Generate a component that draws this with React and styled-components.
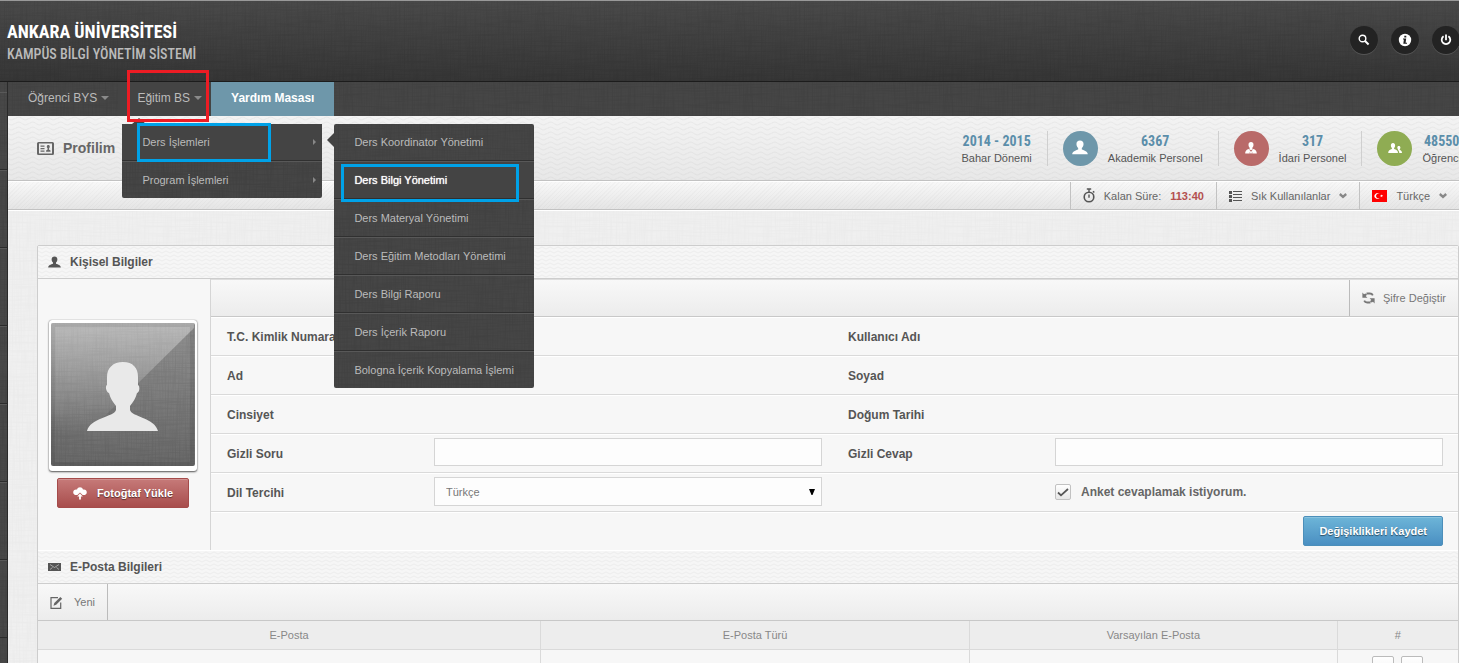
import React from 'react';
import styled, { createGlobalStyle, css } from 'styled-components';

const svgUrl = (svg) => `url("data:image/svg+xml,${encodeURIComponent(svg)}")`;

const linen = (alpha) =>
  svgUrl(
    `<svg xmlns="http://www.w3.org/2000/svg" width="200" height="200"><filter id="h" x="0" y="0" width="100%" height="100%"><feTurbulence type="fractalNoise" baseFrequency="0.03 0.7" numOctaves="2" stitchTiles="stitch"/><feColorMatrix values="0 0 0 0 0  0 0 0 0 0  0 0 0 0 0  2 0 0 0 -0.8"/></filter><filter id="v" x="0" y="0" width="100%" height="100%"><feTurbulence type="fractalNoise" baseFrequency="0.7 0.03" numOctaves="2" seed="4" stitchTiles="stitch"/><feColorMatrix values="0 0 0 0 0  0 0 0 0 0  0 0 0 0 0  2 0 0 0 -0.8"/></filter><g opacity="${alpha}"><rect width="200" height="200" filter="url(#h)"/><rect width="200" height="200" filter="url(#v)"/></g></svg>`
  );

const darkLinen = linen(0.08);
const lightLinen = linen(0.02);

const waves = svgUrl(
  '<svg xmlns="http://www.w3.org/2000/svg" width="14" height="5"><path d="M0 2.500C3 4.500 4 4 7 2.500S11 .5 14 2.500" fill="none" stroke="#000" stroke-opacity=".03"/></svg>'
);

const smallWaves = svgUrl(
  '<svg xmlns="http://www.w3.org/2000/svg" width="8" height="4"><path d="M0 1l4 2 4-2" fill="none" stroke="#000" stroke-opacity=".035"/></svg>'
);

const GlobalStyle = createGlobalStyle`
  * {
    box-sizing: border-box;
  }
  body {
    margin: 0;
    background: #efefef;
    color: #555;
    font-family: 'Liberation Sans', Arial, sans-serif;
    font-size: 11px;
    line-height: 14px;
  }
  ul {
    margin: 0;
    padding: 0;
    list-style: none;
  }
  a {
    color: inherit;
    text-decoration: none;
  }
  button, input, select {
    font: inherit;
    color: inherit;
  }
  svg {
    display: block;
    flex: none;
  }
`;

const PersonIcon = ({ size = 13 }) => (
  <svg width={size} height={size} viewBox="0 0 14 14" fill="currentColor">
    <path d="M7 .5C5 .5 3.900 1.700 3.900 3.500c0 1.600.6 2.700 1.500 3.600v1.200C3.200 9.200.2 9.800.2 12.500h13.600c0-2.700-3-3.300-5.200-4.200V7.100c.9-.9 1.500-2 1.500-3.600C10.100 1.700 9 .5 7 .5z" />
  </svg>
);

const TiePersonIcon = () => (
  <svg width="14" height="14" viewBox="0 0 14 14">
    <path
      fill="#fff"
      d="M7 1C5.400 1 4.500 2.100 4.500 3.700c0 1.400.5 2.400 1.200 3.100v.9C3.500 8.300 1.200 9 1.200 12.500h11.600c0-3.500-2.300-4.200-4.500-4.800v-.9c.7-.7 1.200-1.700 1.200-3.100C9.500 2.100 8.600 1 7 1z"
    />
    <path fill="#b96a69" d="M5 8l2 1.200L9 8l-1.200 2 .8 2.500H5.400L6.200 10z" />
    <path fill="#fff" d="M6.500 10h1l.6 1.500L7 12.500l-1.100-1z" />
  </svg>
);

const PeopleIcon = () => (
  <svg width="16" height="14" viewBox="0 0 16 14" fill="#fff">
    <path d="M6 2C4.600 2 3.900 3 3.900 4.300c0 1.300.4 2.200 1 2.800v1C3 8.700 1.200 9.300 1.200 12H11c0-2.700-2-3.300-3.900-3.900v-1c.6-.6 1-1.500 1-2.800C8.100 3 7.400 2 6 2z" />
    <path d="M11.800 5c-1 0-1.500.7-1.500 1.600 0 .8.3 1.400.7 1.800v.7c.7.5 1.200 1.500 1.300 2.900H15c0-1.900-1-2.500-2.300-2.900v-.7c.4-.4.7-1 .7-1.800 0-.9-.6-1.600-1.600-1.600z" />
  </svg>
);

const SearchIcon = () => (
  <svg width="12" height="12" viewBox="0 0 12 12" fill="none" stroke="#fff">
    <circle cx="4.500" cy="4.500" r="3.300" strokeWidth="1.400" />
    <path d="M6.800 6.800l3.800 3.600" strokeWidth="2" />
  </svg>
);

const InfoIcon = () => (
  <svg width="14" height="14" viewBox="0 0 14 14">
    <circle cx="7" cy="7" r="6.200" fill="#fff" />
    <path fill="#222" d="M6.300 2.800h2v1.700h-2zM5 5.500h3.200l-.6 4.200H9v1.100H5.300l.6-4.200H5z" />
  </svg>
);

const PowerIcon = () => (
  <svg width="12" height="12" viewBox="0 0 12 12" fill="none" stroke="#fff" strokeWidth="1.800">
    <path d="M3.600 2.300a4.300 4.300 0 1 0 4.800 0M6 .6v5.600" />
  </svg>
);

const CardIcon = () => (
  <svg width="17" height="13" viewBox="0 0 17 13" fill="#666">
    <path fillRule="evenodd" d="M1.500 0h14A1.500 1.500 0 0 1 17 1.500v10a1.500 1.500 0 0 1-1.500 1.500h-14A1.500 1.500 0 0 1 0 11.500v-10A1.500 1.500 0 0 1 1.500 0zM2 1.500v10h13v-10z" />
    <path d="M3.500 3.500h4v1.200h-4zM3.500 6h4v1.200h-4zM3.500 8.500h4v1.200h-4zM11.300 3c1 0 1.500.7 1.500 1.600 0 .8-.3 1.400-.8 1.800v1.100l1.500.9v1.400H9.100V8.400l1.500-.9V6.400c-.5-.4-.8-1-.8-1.800 0-.9.5-1.600 1.500-1.600z" />
  </svg>
);

const StopwatchIcon = () => (
  <svg width="12" height="15" viewBox="0 0 12 15" fill="none" stroke="#555">
    <circle cx="6" cy="9" r="4.800" strokeWidth="1.600" />
    <path d="M3.800 1h4.400M6 1v3M6 6.500v3.200M10 3.300l1.300 1.300" strokeWidth="1.400" />
  </svg>
);

const ListIcon = () => (
  <svg width="13" height="12" viewBox="0 0 13 12" fill="#555">
    <path d="M0 1h3v3H0zM0 5h3v3H0zM0 9h3v3H0zM4 1h9v1H4zM4 4h9v1H4zM4 7h9v1H4zM4 10h9v1H4z" />
  </svg>
);

const FlagIcon = () => (
  <svg width="15" height="12" viewBox="0 0 15 12">
    <path fill="#f00" d="M0 0h15v12H0z" />
    <path fill="#fff" d="M7.600 4.100a2.900 2.900 0 1 0 0 3.800 2.300 2.300 0 1 1 0-3.800zM8.300 5.300l1-.1.500-.8.300.9 1 .5-.9.500-.1 1-.8-.7-1 .2.500-.8z" />
  </svg>
);

const ChevronIcon = () => (
  <svg width="8" height="6" viewBox="0 0 8 6" fill="none" stroke="#888" strokeWidth="2.400">
    <path d="M.8 1l3.200 2.800L7.200 1" />
  </svg>
);

const RefreshIcon = () => (
  <svg width="13" height="12" viewBox="0 0 13 12">
    <path d="M4.500 1.500h3.300c1.500 0 2.500.6 3 1.800M8.500 10.500H5.200c-1.500 0-2.500-.6-3-1.800" fill="none" stroke="#777" strokeWidth="1.800" />
    <path d="M.4.600v5.200h5L3.700 4.100l1.400-1.400L3.400 1.500 2 2.200zM12.600 11.400V6.200h-5l1.700 1.700-1.400 1.400 1.700 1.200 1.400-.7z" fill="#777" />
  </svg>
);

const CloudIcon = () => (
  <svg width="14" height="13" viewBox="0 0 14 13" fill="#fff">
    <path d="M4 2.600C4.500 1 5.600.3 7 .3s2.500.7 3 2.300c2.200-.5 3.800.8 3.800 2.600 0 1.700-1.300 2.900-3 2.900H9.600L7 5.400 4.400 8.100H3.200C1.500 8.100.2 6.900.2 5.200.2 3.400 1.800 2.100 4 2.600z" />
    <path d="M7 6.600l2.800 3H7.900v3H6.100v-3H4.200z" />
  </svg>
);

const MailIcon = () => (
  <svg width="13" height="8" viewBox="0 0 13 8">
    <path fill="#555" d="M0 0h13v8H0z" />
    <path d="M2 1.500l4.500 3 4.500-3M2 6.500l2.500-2M11 6.500l-2.500-2" fill="none" stroke="#ddd" strokeWidth=".6" />
  </svg>
);

const EditIcon = () => (
  <svg width="13" height="13" viewBox="0 0 13 13">
    <path d="M8 1.700H1v10.600h9.700V6.500" fill="none" stroke="#666" strokeWidth="1.200" />
    <path d="M3.500 9.700l.8-2.600L10.300 1l1.900 1.700-6 6.100z" fill="#666" />
  </svg>
);

const Avatar = () => (
  <svg width="143" height="143" viewBox="0 0 143 143">
    <defs>
      <linearGradient id="shine" x1="0" y1="0" x2="0" y2="1">
        <stop offset="0" stopColor="#fff" stopOpacity=".38" />
        <stop offset=".75" stopColor="#fff" stopOpacity="0" />
      </linearGradient>
    </defs>
    <path d="M0 0h143v5L0 146z" fill="url(#shine)" />
    <path
      d="M72 39c-10 0-16 6-16 15v8c-2 1-1 7 2 8 1 5 4 9 7 13v4c-2 7-26 8-29 21h71c-3-13-26-14-28-21v-4c3-4 6-8 7-13 3-1 3-7 1-8v-8c0-9-5-15-15-15z"
      fill="#e9e9e9"
    />
    <rect x="2" y="2" width="139" height="139" fill="none" stroke="#000" strokeOpacity=".08" strokeWidth="4" />
  </svg>
);

const menuItems = [
  'Ders Koordinator Yönetimi',
  'Ders Bilgi Yönetimi',
  'Ders Materyal Yönetimi',
  'Ders Eğitim Metodları Yönetimi',
  'Ders Bilgi Raporu',
  'Ders İçerik Raporu',
  'Bologna İçerik Kopyalama İşlemi',
];

const stats = [
  { value: '6367', label: 'Akademik Personel', color: '#6e97aa', icon: <PersonIcon size={16} /> },
  { value: '317', label: 'İdari Personel', color: '#b96a69', icon: <TiePersonIcon /> },
  { value: '48550', label: 'Öğrenci', color: '#8fac53', icon: <PeopleIcon /> },
];

const App = () => {
  return (
    <Viewport>
      <GlobalStyle />
      <Page>
        <Header>
          <Brand>
            <BrandName>ANKARA ÜNİVERSİTESİ</BrandName>
            <BrandSub>KAMPÜS BİLGİ YÖNETİM SİSTEMİ</BrandSub>
          </Brand>
          <HeaderButtons>
            <RoundButton aria-label="Ara"><SearchIcon /></RoundButton>
            <RoundButton aria-label="Bilgi"><InfoIcon /></RoundButton>
            <RoundButton aria-label="Çıkış"><PowerIcon /></RoundButton>
          </HeaderButtons>
        </Header>
        <Body>
          <Sidebar>
            {[1, 2, 3, 4, 5, 6, 7].map((n) => (
              <SideItem key={n} />
            ))}
          </Sidebar>
          <Main>
            <Nav>
              <NavItem>
                <NavLink href="#">Öğrenci BYS<Caret /></NavLink>
              </NavItem>
              <NavItem $open>
                <NavLink href="#">Eğitim BS<Caret /></NavLink>
                <Menu $place="below">
                  <MenuItem $active>
                    <MenuLink href="#">Ders İşlemleri<MenuArrow /></MenuLink>
                    <Menu $place="side">
                      {menuItems.map((item, i) => (
                        <MenuItem key={item} $active={i === 1}>
                          <MenuLink href="#" $current={i === 1}>{item}</MenuLink>
                          {i === 1 && <PageMark />}
                        </MenuItem>
                      ))}
                    </Menu>
                    <GroupMark />
                  </MenuItem>
                  <MenuItem>
                    <MenuLink href="#">Program İşlemleri<MenuArrow /></MenuLink>
                  </MenuItem>
                </Menu>
                <TabMark />
              </NavItem>
              <NavItem>
                <HelpLink href="#">Yardım Masası</HelpLink>
              </NavItem>
            </Nav>

            <TitleBar>
              <Title><CardIcon />Profilim</Title>
              <Stats>
                <Stat>
                  <StatText>
                    <StatValue>2014 - 2015</StatValue>
                    Bahar Dönemi
                  </StatText>
                </Stat>
                {stats.map((s) => (
                  <Stat key={s.label}>
                    <StatBadge $color={s.color}>{s.icon}</StatBadge>
                    <StatText>
                      <StatValue>{s.value}</StatValue>
                      {s.label}
                    </StatText>
                  </Stat>
                ))}
              </Stats>
            </TitleBar>

            <ToolBar>
              <Tool as="div"><StopwatchIcon />Kalan Süre: <Remaining>113:40</Remaining></Tool>
              <Tool><ListIcon />Sık Kullanılanlar<ChevronIcon /></Tool>
              <Tool><FlagIcon />Türkçe<ChevronIcon /></Tool>
            </ToolBar>

            <Panel>
              <PanelHead><PersonIcon />Kişisel Bilgiler</PanelHead>
              <Profile>
                <PhotoColumn>
                  <PhotoFrame>
                    <Photo><Avatar /></Photo>
                  </PhotoFrame>
                  <Button $tone="red"><CloudIcon />Fotoğtaf Yükle</Button>
                </PhotoColumn>
                <Form onSubmit={(e) => e.preventDefault()}>
                  <ActionBar $end>
                    <Action type="button" $side="left"><RefreshIcon />Şifre Değiştir</Action>
                  </ActionBar>
                  <Row>
                    <Field><Label as="span">T.C. Kimlik Numarası</Label></Field>
                    <Field><Label as="span">Kullanıcı Adı</Label></Field>
                  </Row>
                  <Row>
                    <Field><Label as="span">Ad</Label></Field>
                    <Field><Label as="span">Soyad</Label></Field>
                  </Row>
                  <Row>
                    <Field><Label as="span">Cinsiyet</Label></Field>
                    <Field><Label as="span">Doğum Tarihi</Label></Field>
                  </Row>
                  <Row>
                    <Field>
                      <Label htmlFor="question">Gizli Soru</Label>
                      <TextInput id="question" />
                    </Field>
                    <Field>
                      <Label htmlFor="answer">Gizli Cevap</Label>
                      <TextInput id="answer" />
                    </Field>
                  </Row>
                  <Row>
                    <Field>
                      <Label htmlFor="language">Dil Tercihi</Label>
                      <Select id="language" defaultValue="tr">
                        <option value="tr">Türkçe</option>
                      </Select>
                    </Field>
                    <Field>
                      <span />
                      <CheckLabel>
                        <CheckBox type="checkbox" defaultChecked />
                        Anket cevaplamak istiyorum.
                      </CheckLabel>
                    </Field>
                  </Row>
                  <SubmitRow>
                    <Button type="submit" $tone="blue">Değişiklikleri Kaydet</Button>
                  </SubmitRow>
                </Form>
              </Profile>

              <PanelHead><MailIcon />E-Posta Bilgileri</PanelHead>
              <ActionBar>
                <Action type="button" $side="right"><EditIcon />Yeni</Action>
              </ActionBar>
              <Table>
                <colgroup>
                  <col style={{ width: '35.4%' }} />
                  <col style={{ width: '30.2%' }} />
                  <col style={{ width: '25.9%' }} />
                  <col />
                </colgroup>
                <thead>
                  <tr>
                    <th>E-Posta</th>
                    <th>E-Posta Türü</th>
                    <th>Varsayılan E-Posta</th>
                    <th>#</th>
                  </tr>
                </thead>
                <tbody>
                  <tr>
                    <td />
                    <td />
                    <td />
                    <td>
                      <RowButtons>
                        <SmallButton aria-label="Düzenle" />
                        <SmallButton aria-label="Sil" />
                      </RowButtons>
                    </td>
                  </tr>
                </tbody>
              </Table>
            </Panel>
          </Main>
        </Body>
      </Page>
    </Viewport>
  );
};

const condensed = css`
  font-family: 'Roboto Condensed', 'Open Sans Condensed', 'Liberation Sans Narrow', 'Liberation Sans', sans-serif;
  font-weight: 700;
`;

const Viewport = styled.div`
  height: 100vh;
  overflow: hidden;
`;

/* the page is a bit wider than the window */
const Page = styled.div`
  display: flex;
  flex-direction: column;
  width: calc(100% + 30px);
  min-height: 100%;
`;

const Header = styled.header`
  display: flex;
  justify-content: space-between;
  height: 82px;
  padding: 20px 29px 0 7px;
  border-top: 1px solid #999;
  border-bottom: 1px solid #1c1c1c;
  background: ${darkLinen}, linear-gradient(#4a4a4a, #363636);
`;

const Brand = styled.div`
  white-space: nowrap;
  ${condensed}
`;

const BrandName = styled.div`
  color: #fff;
  font-size: 18px;
  line-height: 22px;
`;

const BrandSub = styled.div`
  color: #bbb;
  font-size: 14px;
  font-weight: 500;
  line-height: 22px;
`;

const HeaderButtons = styled.div`
  display: flex;
  gap: 13px;
  padding-top: 5px;
`;

const RoundButton = styled.button`
  display: flex;
  align-items: center;
  justify-content: center;
  width: 28px;
  height: 28px;
  padding: 0;
  border: 0;
  border-radius: 50%;
  background: #232323;
  box-shadow: 0 1px 0 #555;
`;

const Body = styled.div`
  display: flex;
  flex: 1;
`;

const Sidebar = styled.aside`
  flex: none;
  width: 8px;
  padding-top: 10px;
  border-right: 1px solid #2a2a2a;
  background: ${darkLinen}, #484848;
`;

const SideItem = styled.div`
  height: 78px;
  border-top: 1px solid #595959;
  border-bottom: 1px solid #2c2c2c;
`;

const Main = styled.main`
  flex: 1;
  min-width: 0;
  background: ${lightLinen}, #f0f0f0;
`;

const Nav = styled.ul`
  display: flex;
  height: 34px;
  padding-left: 1px;
  background: ${darkLinen}, #464646;
`;

const NavItem = styled.li`
  position: relative;
  background: ${({ $open }) => ($open ? '#444' : 'transparent')};
`;

const NavLink = styled.a`
  display: flex;
  align-items: center;
  gap: 4px;
  height: 34px;
  padding: 0 9px 2px 19px;
  color: #bbb;
  font-size: 12px;
  white-space: nowrap;
`;

const HelpLink = styled(NavLink)`
  padding: 0 20px 2px;
  background: #6e97aa;
  color: #fff;
  font-weight: bold;
`;

const Caret = styled.span`
  border: 4px solid transparent;
  border-top-color: #8a8a8a;
  border-bottom: 0;
`;

const Menu = styled.ul`
  position: absolute;
  z-index: 1;
  width: 200px;
  border-radius: 2px;
  background: ${darkLinen}, #464646;
  ${({ $place }) =>
    $place === 'below'
      ? css`
          top: 42px;
          left: 4px;
        `
      : css`
          top: 0;
          left: 212px;
        `}
  &::before {
    content: '';
    position: absolute;
    border: 7px solid transparent;
    ${({ $place }) =>
      $place === 'below'
        ? css`
            top: -6px;
            left: 10px;
            border-top: 0;
            border-bottom: 6px solid #444;
          `
        : css`
            top: 9px;
            left: -7px;
            border-left: 0;
            border-right-color: #444;
          `}
  }
`;

const MenuItem = styled.li`
  position: relative;
  background: ${({ $active }) => ($active ? '#444' : 'transparent')};
  & + & {
    border-top: 1px solid #303030;
    box-shadow: inset 0 1px 0 #585858;
    padding-top: 1px;
  }
`;

const MenuLink = styled.a`
  display: flex;
  align-items: center;
  justify-content: space-between;
  height: 36px;
  padding: 0 6px 0 20px;
  color: ${({ $current }) => ($current ? '#fff' : '#bbb')};
  text-shadow: ${({ $current }) => ($current ? '0 0 1px #fff' : 'none')};
  white-space: nowrap;
`;

const MenuArrow = styled.span`
  border: 3px solid transparent;
  border-left-color: #888;
  border-right: 0;
`;

/* hand-placed highlight frames over the menus */
const Mark = styled.span`
  position: absolute;
  z-index: 2;
  border: 3px solid #00a2e8;
  pointer-events: none;
`;

const TabMark = styled(Mark)`
  top: -12px;
  left: 9px;
  width: 82px;
  height: 52px;
  border-color: #ed1c24;
`;

const GroupMark = styled(Mark)`
  top: -1px;
  left: 15px;
  width: 134px;
  height: 39px;
`;

const PageMark = styled(Mark)`
  top: 3px;
  left: 7px;
  width: 178px;
  height: 38px;
`;

const TitleBar = styled.div`
  display: flex;
  align-items: center;
  justify-content: space-between;
  height: 65px;
  padding: 0 13px 0 29px;
  border-bottom: 1px solid #c2c2c2;
  background: ${waves}, linear-gradient(#f3f3f3, #e8e8e8);
`;

const Title = styled.h1`
  display: flex;
  align-items: center;
  gap: 9px;
  margin: 0;
  color: #666;
  font-size: 14px;
`;

const Stats = styled.ul`
  display: flex;
`;

const Stat = styled.li`
  display: flex;
  align-items: center;
  gap: 10px;
  height: 35px;
  padding: 0 15px;
  & + & {
    border-left: 1px solid #cfcfcf;
  }
`;

const StatBadge = styled.span`
  display: flex;
  align-items: center;
  justify-content: center;
  width: 35px;
  height: 35px;
  border-radius: 50%;
  background: ${({ $color }) => $color};
  color: #fff;
`;

const StatText = styled.div`
  color: #555;
  text-align: center;
  white-space: nowrap;
`;

const StatValue = styled.div`
  ${condensed}
  color: #5b8eaa;
  font-size: 14px;
  line-height: 20px;
`;

const ToolBar = styled.div`
  display: flex;
  justify-content: flex-end;
  height: 29px;
  padding-right: 30px;
  border-top: 1px solid #fff;
  border-bottom: 1px solid #c2c2c2;
  background:
    repeating-linear-gradient(135deg, rgba(0, 0, 0, 0.02) 0 1px, transparent 1px 3px),
    linear-gradient(#f8f8f8, #e5e5e5);
  box-shadow: 0 1px 0 #fff;
`;

const Tool = styled.button`
  display: flex;
  align-items: center;
  gap: 9px;
  padding: 0 12px;
  border: 0;
  border-left: 1px solid #c2c2c2;
  background: none;
  color: #666;
  white-space: nowrap;
`;

const Remaining = styled.b`
  color: #b4504f;
`;

const Panel = styled.section`
  margin: 35px 30px 0 29px;
  border: 1px solid #cdcdcd;
  border-radius: 2px 2px 0 0;
  background: #f7f7f7;
`;

const PanelHead = styled.h2`
  display: flex;
  align-items: center;
  gap: 9px;
  height: 33px;
  margin: 0;
  padding: 0 10px;
  border-bottom: 1px solid #cdcdcd;
  background: ${smallWaves}, #f6f6f6;
  color: #555;
  font-size: 12px;
`;

const Profile = styled.div`
  display: flex;
  border-bottom: 1px solid #fff;
`;

const PhotoColumn = styled.div`
  display: flex;
  flex: none;
  flex-direction: column;
  align-items: center;
  gap: 7px;
  width: 172px;
  padding: 41px 2px 42px 0;
`;

const PhotoFrame = styled.div`
  width: 148px;
  height: 151px;
  padding: 3px 2px;
  border-radius: 3px;
  background: #fff;
  box-shadow: 0 1px 2px #555, 0 0 1px #777;
`;

const Photo = styled.div`
  border-radius: 2px;
  overflow: hidden;
  background: ${darkLinen}, linear-gradient(#929292, #686868);
`;

const Button = styled.button`
  display: flex;
  align-items: center;
  gap: 10px;
  height: 30px;
  padding: 0 15px;
  border-radius: 2px;
  color: #fff;
  font-weight: bold;
  text-shadow: 0 1px 1px rgba(0, 0, 0, 0.5);
  box-shadow: inset 0 1px 0 rgba(255, 255, 255, 0.2);
  white-space: nowrap;
  ${({ $tone }) =>
    $tone === 'red'
      ? css`
          border: 1px solid #a54b4a;
          background: linear-gradient(#c67a79, #a84d4c);
        `
      : css`
          border: 1px solid #4c8fba;
          background: linear-gradient(#6db5d8, #4a8fc2);
        `}
`;

const Form = styled.form`
  flex: 1;
  min-width: 0;
  border-left: 1px solid #d5d5d5;
`;

const ActionBar = styled.div`
  display: flex;
  justify-content: ${({ $end }) => ($end ? 'flex-end' : 'flex-start')};
  height: ${({ $end }) => ($end ? '38px' : '37px')};
  border-top: ${({ $end }) => ($end ? '1px solid #ddd' : '0')};
  border-bottom: 1px solid #c8c8c8;
  background: linear-gradient(#f8f8f8, #ececec);
`;

const Action = styled.button`
  display: flex;
  align-items: center;
  gap: ${({ $side }) => ($side === 'left' ? '8px' : '11px')};
  padding: 0 12px;
  border: 0;
  border-${({ $side }) => $side}: 1px solid #bbb;
  background: none;
  color: #777;
  white-space: nowrap;
`;

const Row = styled.div`
  display: grid;
  grid-template-columns: 1fr 1fr;
  column-gap: 26px;
  align-items: center;
  height: 39px;
  padding: 0 15px 0 16px;
  border-top: 1px solid #fff;
  border-bottom: 1px solid #dadada;
`;

const Field = styled.div`
  display: grid;
  grid-template-columns: 207px minmax(0, 1fr);
  align-items: center;
`;

const Label = styled.label`
  color: #555;
  font-size: 12px;
  font-weight: bold;
  white-space: nowrap;
`;

const TextInput = styled.input`
  width: 100%;
  height: 28px;
  padding: 0 11px;
  border: 1px solid #d5d5d5;
  background: #fdfdfd;
  margin-bottom: 4px;
`;

const Select = styled.select`
  width: 100%;
  height: 29px;
  padding: 0 11px;
  border: 1px solid #d5d5d5;
  border-radius: 0;
  appearance: none;
  background: #fdfdfd
    ${svgUrl('<svg xmlns="http://www.w3.org/2000/svg" width="6" height="6"><path d="M0 0h6L3.500 6h-1z"/></svg>')}
    no-repeat right 6px center;
  color: #777;
  margin-bottom: 2px;
`;

const CheckLabel = styled.label`
  display: flex;
  align-items: center;
  gap: 10px;
  padding-bottom: 2px;
  color: #666;
  font-size: 12px;
  font-weight: bold;
`;

const CheckBox = styled.input`
  width: 16px;
  height: 16px;
  margin: 0;
  border: 1px solid #c2c2c2;
  border-radius: 2px;
  appearance: none;
  background: linear-gradient(#fff, #e6e6e6);
  &:checked {
    background:
      ${svgUrl('<svg xmlns="http://www.w3.org/2000/svg" width="14" height="14"><path d="M2 7.500l3 2.800L12 4" fill="none" stroke="#555" stroke-width="1.800"/></svg>')}
        center no-repeat,
      linear-gradient(#fff, #e6e6e6);
  }
`;

const SubmitRow = styled.div`
  display: flex;
  justify-content: flex-end;
  height: 38px;
  padding: 3px 15px;
  border-top: 1px solid #fff;
`;

const Table = styled.table`
  width: 100%;
  border-collapse: collapse;
  table-layout: fixed;
  th,
  td {
    padding: 0;
    border-bottom: 1px solid #dadada;
  }
  th + th,
  td + td {
    border-left: 1px solid #dadada;
  }
  th {
    height: 28px;
    background: #ededed;
    color: #888;
    font-weight: normal;
  }
  td {
    height: 37px;
  }
`;

const RowButtons = styled.div`
  display: flex;
  justify-content: center;
  gap: 7px;
`;

const SmallButton = styled.button`
  width: 22px;
  height: 24px;
  padding: 0;
  border: 1px solid #bbb;
  border-radius: 2px;
  background: linear-gradient(#fff, #eee);
`;

export default App;
